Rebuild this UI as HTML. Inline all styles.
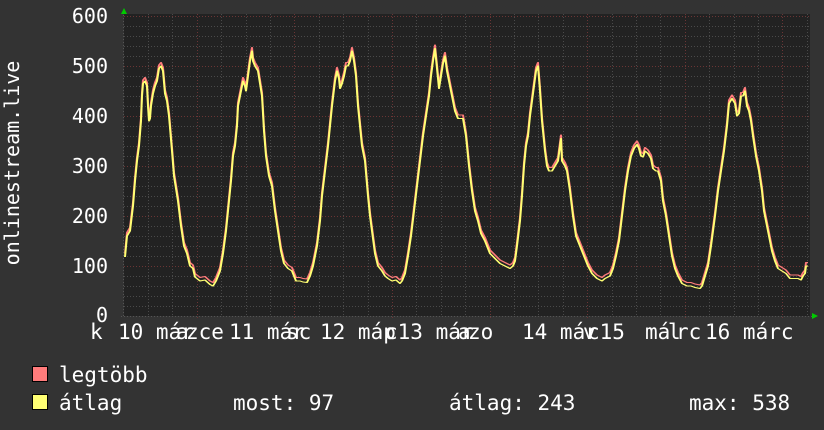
<!DOCTYPE html>
<html><head><meta charset="utf-8"><style>
html,body{margin:0;padding:0;background:#333;width:824px;height:430px;overflow:hidden}
svg{display:block}
text{font-family:"DejaVu Sans Mono","Liberation Mono",monospace;fill:#fff}
</style></head><body>
<svg width="824" height="430" viewBox="0 0 824 430" xmlns="http://www.w3.org/2000/svg">
<defs>
<polyline id="d" points="125,118 127,160 130,170 133,220 135,270 137,310 139,340 141,390 142,440 143,465 145,470 147,460 148,420 149,390 150,395 151,420 153,445 155,460 157,470 159,495 161,500 163,490 165,445 167,430 169,400 172,330 174,280 178,230 181,180 184,140 187,125 190,100 193,95 195,78 200,70 205,72 210,63 213,60 216,70 220,90 223,125 226,170 229,230 231,270 233,320 235,340 237,380 238,420 240,440 242,460 243,470 245,460 246,450 248,480 250,510 252,530 253,510 255,500 258,490 262,440 264,370 266,320 269,280 272,260 275,210 278,170 281,130 284,105 288,95 292,90 296,70 300,70 303,68 307,67 310,80 313,100 317,140 320,190 322,240 325,290 328,340 330,380 332,420 335,470 337,490 339,475 340,455 342,465 344,480 346,500 348,500 350,510 352,530 354,510 356,480 358,420 360,380 362,340 365,310 368,240 370,200 372,170 375,125 378,100 382,90 385,80 388,75 392,70 396,72 400,65 402,70 405,85 408,120 411,160 414,210 417,260 420,310 423,360 426,400 429,440 431,480 433,510 435,535 437,495 439,455 441,480 443,505 445,520 447,490 450,460 453,430 455,410 458,395 463,395 466,360 469,300 472,250 475,210 478,190 481,165 485,150 490,125 495,115 500,105 505,100 510,95 513,100 515,110 517,140 520,190 522,240 524,300 526,340 528,360 530,400 532,430 534,460 536,490 538,500 540,450 542,390 545,330 547,300 549,290 552,290 555,300 558,310 560,340 561,355 562,310 565,300 567,290 570,250 573,200 576,160 580,140 584,120 588,100 592,85 597,75 602,70 605,75 610,80 613,95 616,120 619,150 622,200 625,250 628,290 631,320 634,335 637,343 639,335 641,320 643,318 645,330 648,325 651,315 653,295 656,290 658,290 661,270 663,230 666,200 669,160 672,120 675,95 678,80 682,65 687,60 691,60 695,57 700,55 702,60 705,80 708,100 711,140 715,200 718,250 721,290 724,330 727,380 729,425 732,435 735,425 737,400 739,405 741,440 743,440 745,450 747,420 749,410 751,390 753,360 756,320 759,290 762,250 764,210 767,180 769,160 772,130 775,110 778,95 782,90 786,85 790,75 795,75 798,75 801,72 803,80 805,85 806,100 808,100"/>
</defs>
<rect x="0" y="0" width="824" height="430" fill="#333"/>
<rect x="124" y="14" width="686" height="302" fill="#222"/>
<g stroke="#4a4a4a" stroke-width="1" stroke-dasharray="1,2">
<line x1="124" x2="810" y1="306.5" y2="306.5"/><line x1="124" x2="810" y1="296.5" y2="296.5"/><line x1="124" x2="810" y1="286.5" y2="286.5"/><line x1="124" x2="810" y1="276.5" y2="276.5"/>
<line x1="124" x2="810" y1="256.5" y2="256.5"/><line x1="124" x2="810" y1="246.5" y2="246.5"/><line x1="124" x2="810" y1="236.5" y2="236.5"/><line x1="124" x2="810" y1="226.5" y2="226.5"/>
<line x1="124" x2="810" y1="206.5" y2="206.5"/><line x1="124" x2="810" y1="196.5" y2="196.5"/><line x1="124" x2="810" y1="186.5" y2="186.5"/><line x1="124" x2="810" y1="176.5" y2="176.5"/>
<line x1="124" x2="810" y1="156.5" y2="156.5"/><line x1="124" x2="810" y1="146.5" y2="146.5"/><line x1="124" x2="810" y1="136.5" y2="136.5"/><line x1="124" x2="810" y1="126.5" y2="126.5"/>
<line x1="124" x2="810" y1="106.5" y2="106.5"/><line x1="124" x2="810" y1="96.5" y2="96.5"/><line x1="124" x2="810" y1="86.5" y2="86.5"/><line x1="124" x2="810" y1="76.5" y2="76.5"/>
<line x1="124" x2="810" y1="56.5" y2="56.5"/><line x1="124" x2="810" y1="46.5" y2="46.5"/><line x1="124" x2="810" y1="36.5" y2="36.5"/><line x1="124" x2="810" y1="26.5" y2="26.5"/>
<line y1="14" y2="316" x1="148.5" x2="148.5"/><line y1="14" y2="316" x1="172.5" x2="172.5"/><line y1="14" y2="316" x1="221.5" x2="221.5"/><line y1="14" y2="316" x1="246.5" x2="246.5"/><line y1="14" y2="316" x1="270.5" x2="270.5"/>
<line y1="14" y2="316" x1="319.5" x2="319.5"/><line y1="14" y2="316" x1="343.5" x2="343.5"/><line y1="14" y2="316" x1="368.5" x2="368.5"/><line y1="14" y2="316" x1="416.5" x2="416.5"/><line y1="14" y2="316" x1="441.5" x2="441.5"/>
<line y1="14" y2="316" x1="465.5" x2="465.5"/><line y1="14" y2="316" x1="514.5" x2="514.5"/><line y1="14" y2="316" x1="538.5" x2="538.5"/><line y1="14" y2="316" x1="563.5" x2="563.5"/><line y1="14" y2="316" x1="612.5" x2="612.5"/>
<line y1="14" y2="316" x1="636.5" x2="636.5"/><line y1="14" y2="316" x1="660.5" x2="660.5"/><line y1="14" y2="316" x1="709.5" x2="709.5"/><line y1="14" y2="316" x1="734.5" x2="734.5"/><line y1="14" y2="316" x1="758.5" x2="758.5"/><line y1="14" y2="316" x1="807.5" x2="807.5"/>
</g>
<g stroke="#6a3535" stroke-width="1" stroke-dasharray="1,2">
<line x1="124" x2="810" y1="266.5" y2="266.5"/><line x1="124" x2="810" y1="216.5" y2="216.5"/><line x1="124" x2="810" y1="166.5" y2="166.5"/><line x1="124" x2="810" y1="116.5" y2="116.5"/><line x1="124" x2="810" y1="66.5" y2="66.5"/><line x1="124" x2="810" y1="16.5" y2="16.5"/>
<line y1="14" y2="320" x1="197.5" x2="197.5"/><line y1="14" y2="320" x1="294.5" x2="294.5"/><line y1="14" y2="320" x1="392.5" x2="392.5"/><line y1="14" y2="320" x1="490.5" x2="490.5"/><line y1="14" y2="320" x1="587.5" x2="587.5"/><line y1="14" y2="320" x1="685.5" x2="685.5"/><line y1="14" y2="320" x1="782.5" x2="782.5"/>
</g>
<line x1="121" x2="812" y1="316.5" y2="316.5" stroke="#555" stroke-dasharray="1,2"/>
<line x1="123.5" x2="123.5" y1="12" y2="318" stroke="#555" stroke-dasharray="1,2"/>
<polygon points="121,14 127,14 124,8" fill="#0c0"/>
<polygon points="812,313 812,319 818,316" fill="#0c0"/>
<g fill="none" stroke-linejoin="round" transform="translate(0,316) scale(1,-0.5)">
<g transform="translate(0,7)"><use href="#d" stroke="#ff7b7b" stroke-width="2" vector-effect="non-scaling-stroke" style="vector-effect:non-scaling-stroke"/></g>
<use href="#d" stroke="#ffff73" stroke-width="2" style="vector-effect:non-scaling-stroke"/>
</g>
<g font-size="20" text-anchor="end">
<text x="108" y="23">600</text><text x="108" y="73">500</text><text x="108" y="123">400</text><text x="108" y="173">300</text><text x="108" y="223">200</text><text x="108" y="273">100</text><text x="108" y="322">0</text>
</g>
<text font-size="20" transform="translate(19,163) rotate(-90)" text-anchor="middle">onlinestream.live</text>
<g font-size="21">
<text x="90" y="339">k</text>
<text x="118" y="339">10 már</text><text x="186" y="339">zce</text><text x="176" y="339">a</text>
<text x="229" y="339">11 már</text><text x="286" y="339">sc</text>
<text x="320" y="339">12 máp</text><text x="385" y="339">c13 már</text><text x="468" y="339">zo</text><text x="458" y="339">a</text>
<text x="522" y="339">14 már</text><text x="587" y="339">c15</text><text x="583" y="339">v</text>
<text x="645" y="339">má</text><text x="676" y="339">rc</text><text x="668" y="339">l</text>
<text x="705" y="339">16 márc</text>
<text x="59" y="382">legtöbb</text>
<text x="59" y="410">átlag</text>
<text x="233" y="410">most: 97</text>
<text x="449" y="410">átlag: 243</text>
<text x="689" y="410">max: 538</text>
</g>
<rect x="32.5" y="366.5" width="15" height="15" fill="#ff7b7b" stroke="#000"/>
<rect x="32.5" y="394.5" width="15" height="15" fill="#ffff73" stroke="#000"/>
</svg>
</body></html>
